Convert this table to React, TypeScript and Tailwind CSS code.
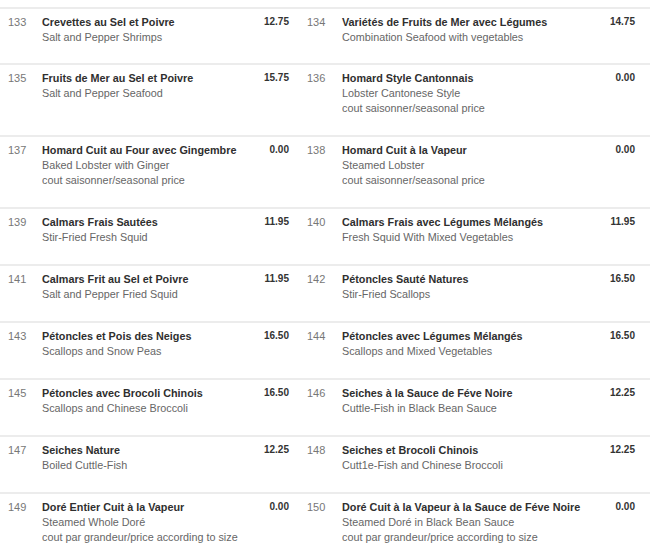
import React from 'react'

type Item = {
  no: number
  fr: string
  en: string
  note?: string
  price: string
}

const rows: [Item, Item][] = [
  [
    { no: 133, fr: 'Crevettes au Sel et Poivre', en: 'Salt and Pepper Shrimps', price: '12.75' },
    { no: 134, fr: 'Variétés de Fruits de Mer avec Légumes', en: 'Combination Seafood with vegetables', price: '14.75' },
  ],
  [
    { no: 135, fr: 'Fruits de Mer au Sel et Poivre', en: 'Salt and Pepper Seafood', price: '15.75' },
    { no: 136, fr: 'Homard Style Cantonnais', en: 'Lobster Cantonese Style', note: 'cout saisonner/seasonal price', price: '0.00' },
  ],
  [
    { no: 137, fr: 'Homard Cuit au Four avec Gingembre', en: 'Baked Lobster with Ginger', note: 'cout saisonner/seasonal price', price: '0.00' },
    { no: 138, fr: 'Homard Cuit à la Vapeur', en: 'Steamed Lobster', note: 'cout saisonner/seasonal price', price: '0.00' },
  ],
  [
    { no: 139, fr: 'Calmars Frais Sautées', en: 'Stir-Fried Fresh Squid', price: '11.95' },
    { no: 140, fr: 'Calmars Frais avec Légumes Mélangés', en: 'Fresh Squid With Mixed Vegetables', price: '11.95' },
  ],
  [
    { no: 141, fr: 'Calmars Frit au Sel et Poivre', en: 'Salt and Pepper Fried Squid', price: '11.95' },
    { no: 142, fr: 'Pétoncles Sauté Natures', en: 'Stir-Fried Scallops', price: '16.50' },
  ],
  [
    { no: 143, fr: 'Pétoncles et Pois des Neiges', en: 'Scallops and Snow Peas', price: '16.50' },
    { no: 144, fr: 'Pétoncles avec Légumes Mélangés', en: 'Scallops and Mixed Vegetables', price: '16.50' },
  ],
  [
    { no: 145, fr: 'Pétoncles avec Brocoli Chinois', en: 'Scallops and Chinese Broccoli', price: '16.50' },
    { no: 146, fr: 'Seiches à la Sauce de Féve Noire', en: 'Cuttle-Fish in Black Bean Sauce', price: '12.25' },
  ],
  [
    { no: 147, fr: 'Seiches Nature', en: 'Boiled Cuttle-Fish', price: '12.25' },
    { no: 148, fr: 'Seiches et Brocoli Chinois', en: 'Cutt1e-Fish and Chinese Broccoli', price: '12.25' },
  ],
  [
    { no: 149, fr: 'Doré Entier Cuit à la Vapeur', en: 'Steamed Whole Doré', note: 'cout par grandeur/price according to size', price: '0.00' },
    { no: 150, fr: 'Doré Cuit à la Vapeur à la Sauce de Féve Noire', en: 'Steamed Doré in Black Bean Sauce', note: 'cout par grandeur/price according to size', price: '0.00' },
  ],
]

const Cell = ({ item, right }: { item: Item; right?: boolean }) => (
  <div className={right ? 'flex w-[351px] pr-[15px]' : 'flex w-[299px] pr-[10px]'}>
    <div className={right ? 'w-[43px] pl-[8px] text-[11px] leading-[15px] text-[#777]' : 'w-[42px] pl-[8px] text-[11px] leading-[15px] text-[#777]'}>
      {item.no}
    </div>
    <div className="flex-1 text-[10.8px] leading-[15px]">
      <div className="font-bold text-[#2f2f2f]">{item.fr}</div>
      <div className="text-[#666]">{item.en}</div>
      {item.note && <div className="text-[#666]">{item.note}</div>}
    </div>
    <div className="text-[10px] leading-[14px] font-bold text-[#333] text-right">{item.price}</div>
  </div>
)

export default function App() {
  return (
    <div className="w-[650px] h-[559px] overflow-hidden bg-white pt-[7px] font-['Liberation_Sans',Arial,sans-serif]">
      {rows.map(([l, r], i) => (
        <div
          key={l.no}
          className={i === 0 ? 'flex border-t-2 border-[#ececec] pt-[6px] pb-[18px]' : 'flex border-t-2 border-[#ececec] pt-[6px] pb-[19px]'}
        >
          <Cell item={l} />
          <Cell item={r} right />
        </div>
      ))}
    </div>
  )
}
